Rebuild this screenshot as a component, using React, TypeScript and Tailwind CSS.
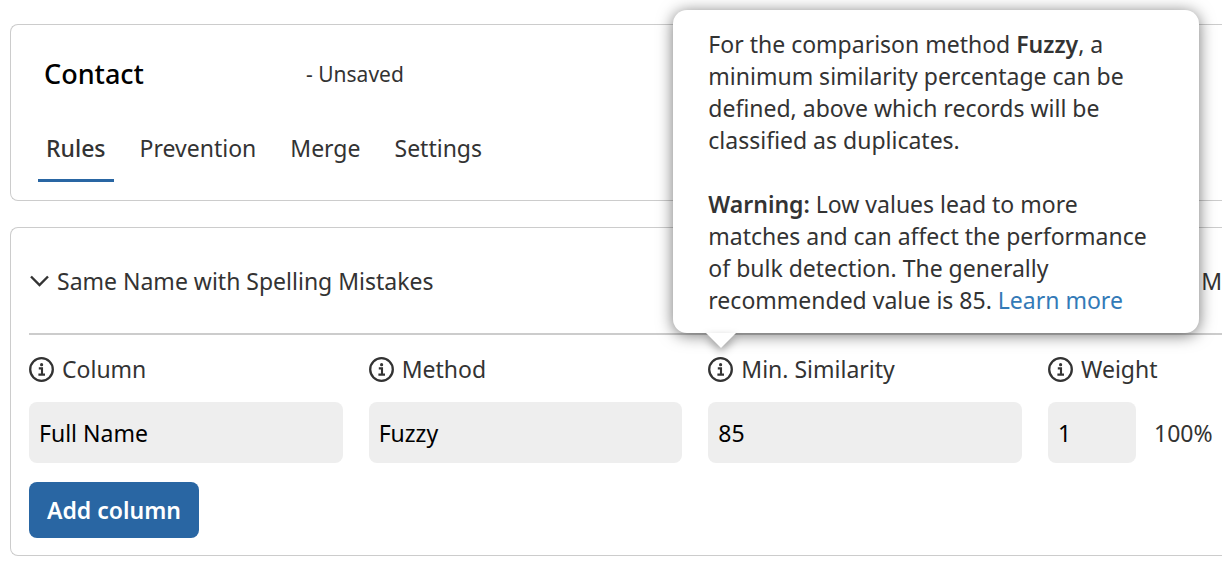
import type { ReactNode } from "react";

const control =
  "h-[61px] w-full min-w-0 appearance-none rounded-lg bg-[#eeeeee] px-[10px] text-[23px] text-black outline-none";

function InfoIcon() {
  return (
    <svg viewBox="0 0 25 25" className="size-[25px] shrink-0" fill="none" aria-hidden="true">
      <circle cx="12.5" cy="12.5" r="11.3" stroke="#333333" strokeWidth="2.3" />
      <circle cx="12.6" cy="7.7" r="1.6" fill="#333333" />
      <path d="M9.8 11.4H13V17.6M9.4 17.6H16" stroke="#333333" strokeWidth="2.1" />
    </svg>
  );
}

function Tooltip() {
  return (
    <div
      role="tooltip"
      className="absolute bottom-[20px] -left-[35px] z-10 w-[526px] rounded-[14px] bg-white pt-[18px] pr-[30px] pb-[17px] pl-[35px] text-[23px] leading-8 text-[#333333] shadow-[0_2px_16px_rgba(0,0,0,0.55)]"
    >
      <p>
        For the comparison method <strong className="font-semibold">Fuzzy</strong>, a<br />
        minimum similarity percentage can be
        <br />
        defined, above which records will be
        <br />
        classified as duplicates.
      </p>
      <p className="mt-8">
        <strong className="font-semibold">Warning:</strong> Low values lead to more
        <br />
        matches and can affect the performance
        <br />
        of bulk detection. The generally
        <br />
        recommended value is 85.{" "}
        <a href="#learn-more" className="text-[#337ab7]">
          Learn more
        </a>
      </p>
      <svg
        viewBox="0 0 30 15"
        className="absolute top-full left-[33px] h-[15px] w-[30px] overflow-visible drop-shadow-[0_4px_4px_rgba(0,0,0,0.35)]"
        aria-hidden="true"
      >
        <path d="M0 0H30L15 15Z" fill="white" />
      </svg>
    </div>
  );
}

function Field({ id, label, tooltip, children }: { id: string; label: string; tooltip?: ReactNode; children: ReactNode }) {
  return (
    <div className="min-w-0">
      <div className="relative flex h-8 items-center gap-2">
        <button type="button" aria-label={`About ${label}`}>
          <InfoIcon />
        </button>
        <label htmlFor={id} className="whitespace-nowrap">
          {label}
        </label>
        {tooltip && <div className="absolute top-0 left-0">{tooltip}</div>}
      </div>
      <div className="mt-[17px] flex items-center">{children}</div>
    </div>
  );
}

const tabs = ["Prevention", "Merge", "Settings"];

export default function App() {
  return (
    <main className="flex flex-col gap-[26px] overflow-hidden bg-white pt-6 pb-3 pl-[10px] font-['Segoe_UI','Noto_Sans',sans-serif] text-[23px] leading-8 text-[#333333]">
      <header className="rounded-l-lg border border-r-0 border-[#cccccc] pt-[33px] pb-[18px] pl-[27px]">
        <div className="flex items-center pl-[6px]">
          <h1 className="w-[262px] text-[27px] leading-8 font-medium text-black">Contact</h1>
          <span className="text-[21px]">- Unsaved</span>
        </div>
        <nav className="mt-[34px] flex gap-[18px]">
          <a href="#rules" aria-current="page" className="border-b-3 border-[#2966a3] px-2 pt-2 pb-[15px] font-medium">
            Rules
          </a>
          {tabs.map((tab) => (
            <a key={tab} href={`#${tab.toLowerCase()}`} className="px-2 pt-2">
              {tab}
            </a>
          ))}
        </nav>
      </header>

      <section className="rounded-l-lg border border-r-0 border-[#cccccc] pb-[17px] pl-[18px]">
        <div className="flex h-[107px] items-center justify-between border-b-2 border-[#cccccc]">
          <button type="button" className="flex items-center gap-2">
            <svg viewBox="0 0 20 12" className="h-3 w-5" fill="none" aria-hidden="true">
              <path d="M2 1.5L10.5 10L19 1.5" stroke="#333333" strokeWidth="2.4" />
            </svg>
            Same Name with Spelling Mistakes
          </button>
          <span>M</span>
        </div>

        <form className="mt-[18px]" onSubmit={(e) => e.preventDefault()}>
          <div className="grid grid-cols-[1fr_1fr_1fr_174px] gap-[26px]">
            <Field id="column" label="Column">
              <select id="column" className={control}>
                <option>Full Name</option>
              </select>
            </Field>
            <Field id="method" label="Method">
              <select id="method" className={control}>
                <option>Fuzzy</option>
              </select>
            </Field>
            <Field id="similarity" label="Min. Similarity" tooltip={<Tooltip />}>
              <input id="similarity" defaultValue="85" className={control} />
            </Field>
            <Field id="weight" label="Weight">
              <div className="w-[88px] shrink-0">
                <input id="weight" defaultValue="1" className={control} />
              </div>
              <span className="ml-[18px]">100%</span>
            </Field>
          </div>
          <button
            type="submit"
            className="mt-[19px] h-14 rounded-lg bg-[#2966a3] px-[18px] font-semibold whitespace-nowrap text-white"
          >
            Add column
          </button>
        </form>
      </section>
    </main>
  );
}
